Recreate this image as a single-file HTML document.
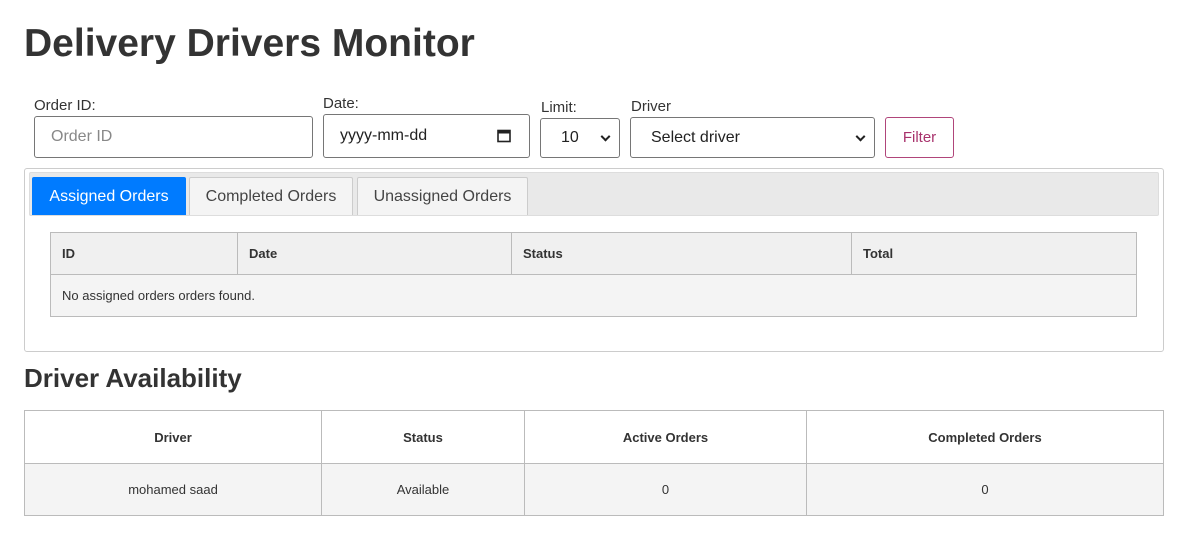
<!DOCTYPE html>
<html><head><meta charset="utf-8"><style>
*{box-sizing:border-box;margin:0;padding:0}
body{width:1185px;height:542px;background:#fff;font-family:"Liberation Sans",Arial,sans-serif;color:#333;position:relative;overflow:hidden}
.a{position:absolute}
h1{position:absolute;left:24px;top:22px;font-size:39px;font-weight:bold;color:#333;letter-spacing:0px;white-space:nowrap}
.lbl{font-size:15px;color:#333}
.box{border:1px solid #767676;border-radius:3px;background:#fff;font-size:16px;display:flex;align-items:center;padding-left:16px}
.chev{position:absolute;right:10px;top:50%;width:7px;height:7px;border-right:2px solid #222;border-bottom:2px solid #222;transform:translateY(-70%) rotate(45deg)}
.tab{position:absolute;top:177px;height:38px;font-size:16px;display:flex;align-items:center;justify-content:center;border:1px solid #ccc;border-bottom:none;background:#f4f4f4;color:#444;border-radius:2px 2px 0 0}
table{border-collapse:collapse;position:absolute}
td,th{border:1px solid #bbb;font-size:13px}
</style></head><body>
<h1>Delivery Drivers Monitor</h1>

<div class="a lbl" style="left:34px;top:97px">Order ID:</div>
<div class="a box" style="left:34px;top:116px;width:279px;height:42px;color:#888">Order ID</div>

<div class="a lbl" style="left:323px;top:95px">Date:</div>
<div class="a box" style="left:323px;top:114px;width:207px;height:44px;color:#222">yyyy-mm-dd
<svg class="a" style="right:18px;top:14px" width="14" height="14" viewBox="0 0 14 14"><rect x="1" y="1.5" width="12" height="11" fill="none" stroke="#222" stroke-width="1.6"/><rect x="1" y="1.5" width="12" height="3" fill="#222"/></svg></div>

<div class="a lbl" style="left:541px;top:99px">Limit:</div>
<div class="a box" style="left:540px;top:118px;width:80px;height:40px;padding-left:20px;color:#222">10<span class="chev"></span></div>

<div class="a lbl" style="left:631px;top:98px">Driver</div>
<div class="a box" style="left:630px;top:117px;width:245px;height:41px;padding-left:20px;color:#222">Select driver<span class="chev"></span></div>

<div class="a" style="left:885px;top:117px;width:69px;height:41px;border:1px solid #b0457a;border-radius:3px;color:#a8326c;font-size:15px;display:flex;align-items:center;justify-content:center">Filter</div>

<div class="a" style="left:24px;top:168px;width:1140px;height:184px;border:1px solid #ccc;border-radius:3px"></div>
<div class="a" style="left:29px;top:172px;width:1130px;height:44px;background:#e9e9e9;border:1px solid #ddd;border-radius:2px"></div>
<div class="tab" style="left:32px;width:154px;background:#007bff;color:#fff;border-color:#007bff">Assigned Orders</div>
<div class="tab" style="left:189px;width:164px">Completed Orders</div>
<div class="tab" style="left:357px;width:171px">Unassigned Orders</div>

<table style="left:50px;top:232px;width:1087px">
<tr style="background:#f0f0f0;height:42px"><th style="width:187px;text-align:left;padding-left:11px">ID</th><th style="width:274px;text-align:left;padding-left:11px">Date</th><th style="width:340px;text-align:left;padding-left:11px">Status</th><th style="text-align:left;padding-left:11px">Total</th></tr>
<tr style="background:#f4f4f4;height:42px"><td colspan="4" style="padding-left:11px;border-left:1px solid #bbb">No assigned orders orders found.</td></tr>
</table>

<div class="a" style="left:24px;top:363px;font-size:26px;font-weight:bold;color:#333">Driver Availability</div>

<table style="left:24px;top:410px;width:1140px">
<tr style="background:#fff;height:53px"><th style="width:297px">Driver</th><th style="width:203px">Status</th><th style="width:282px">Active Orders</th><th>Completed Orders</th></tr>
<tr style="background:#f4f4f4;height:52px;text-align:center"><td>mohamed saad</td><td>Available</td><td>0</td><td>0</td></tr>
</table>
</body></html>
